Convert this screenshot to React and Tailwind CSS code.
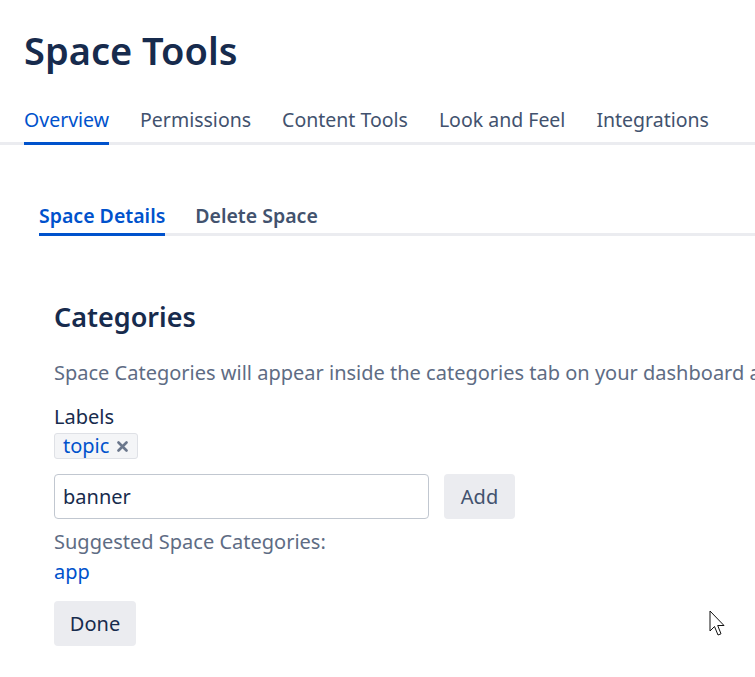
import React from 'react';

const tabs = ['Overview', 'Permissions', 'Content Tools', 'Look and Feel', 'Integrations'];

export default function App() {
    return (
        <div
            className="relative w-[755px] h-[677px] overflow-hidden bg-white text-[#172b4d]"
            style={{ fontFamily: '"Noto Sans", "Open Sans", sans-serif' }}
        >
            <h1 className="pl-[24px] pt-[24px] text-[38px] leading-[52px] font-semibold text-[#172b4d]">Space Tools</h1>

            <div className="mt-[30px] flex gap-[31px] pl-[24px] border-b-[3px] border-[#ebecf0]">
                {tabs.map((t, i) => (
                    <div
                        key={t}
                        className={
                            'pt-[1px] pb-[9px] text-[19.5px] leading-[26px] whitespace-nowrap -mb-[3px] border-b-[3px] ' +
                            (i === 0 ? 'text-[#0052cc] border-[#0052cc]' : 'text-[#42526e] border-transparent')
                        }
                    >
                        {t}
                    </div>
                ))}
            </div>

            <div className="ml-[39px] mt-[58px] flex gap-[30px] border-b-[3px] border-[#ebecf0]">
                <div className="pb-[4px] -mb-[3px] border-b-[3px] border-[#0052cc] text-[19.5px] leading-[26px] font-semibold text-[#0052cc]">
                    Space Details
                </div>
                <div className="pb-[4px] text-[19.5px] leading-[26px] font-semibold text-[#42526e]">Delete Space</div>
            </div>

            <div className="pl-[54px] pt-[64px]">
                <h2 className="text-[27px] leading-[34px] font-semibold text-[#172b4d]">Categories</h2>
                <p className="mt-[25px] text-[20px] leading-[28px] whitespace-nowrap text-[#5e6c84]">
                    Space Categories will appear inside the categories tab on your dashboard and in the space directory.
                </p>
                <div className="mt-[16px] text-[20px] leading-[28px] text-[#172b4d]">Labels</div>
                <div className="mt-[2px] inline-flex items-center gap-[8px] h-[26px] pl-[8px] pr-[9px] rounded-[3px] border border-[#dfe1e6] bg-[#f4f5f7]">
                    <span className="text-[20px] leading-[24px] text-[#0052cc]">topic</span>
                    <svg width="11" height="11" viewBox="0 0 11 11">
                        <path d="M1.5 1.5 L9.5 9.5 M9.5 1.5 L1.5 9.5" stroke="#6b778c" strokeWidth="2.6" strokeLinecap="round" />
                    </svg>
                </div>

                <div className="mt-[15px] flex gap-[15px]">
                    <div className="w-[375px] h-[45px] px-[8px] flex items-center rounded-[4px] border border-[#c1c7d0] text-[20px] text-[#172b4d]">
                        banner
                    </div>
                    <button className="w-[71px] h-[45px] rounded-[4px] bg-[#ebecf0] text-[20px] text-[#42526e]">Add</button>
                </div>

                <div className="mt-[8px] text-[20px] leading-[30px] text-[#5e6c84]">Suggested Space Categories:</div>
                <div className="text-[20px] leading-[30px] text-[#0052cc]">app</div>

                <button className="mt-[14px] w-[82px] h-[45px] rounded-[4px] bg-[#ebecf0] text-[20px] text-[#172b4d]">Done</button>
            </div>

            <svg className="absolute left-[709px] top-[610px]" width="20" height="28" viewBox="0 0 20 28">
                <path d="M1 1 L1 21 L5.5 16.5 L9 25 L12 23.8 L8.7 15.5 L15 15.5 Z" fill="white" stroke="#111" strokeWidth="1" strokeLinejoin="round" />
            </svg>
        </div>
    );
}
